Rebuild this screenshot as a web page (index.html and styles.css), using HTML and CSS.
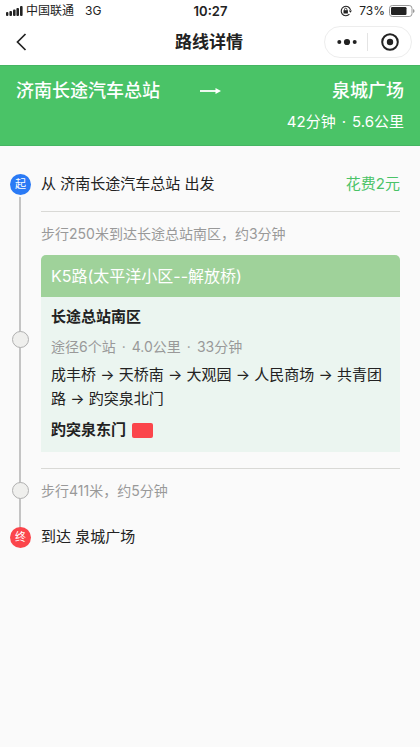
FILE: index.html
```html
<!DOCTYPE html>
<html lang="zh-CN">
<head>
<meta charset="utf-8">
<meta name="viewport" content="width=device-width, initial-scale=1">
<title>路线详情</title>
<link rel="stylesheet" href="styles.css">
</head>
<body>
<div class="status">
  <div class="status-left">
    <svg class="signal" width="17" height="10" viewBox="0 0 17 10" aria-hidden="true">
      <rect x="0" y="6" width="2.4" height="4" rx="1"/><rect x="3.4" y="5" width="2.6" height="5" rx="1"/><rect x="7" y="3.5" width="2.6" height="6.5" rx="1"/><rect x="10.4" y="2" width="2.6" height="8" rx="1"/><rect x="14" y="0" width="2.6" height="10" rx="1"/>
    </svg>
    <span>中国联通</span>
    <span class="network">3G</span>
  </div>
  <span class="clock">10:27</span>
  <div class="status-right">
    <svg width="12" height="12" viewBox="0 0 12 12" fill="none" stroke="#222" aria-hidden="true">
      <path d="M9.4 9.2A4.7 4.7 0 1 1 10.5 5" stroke-width="1.1"/><path d="M8.8 5.4H12L10.4 7.8Z" fill="#222" stroke="none"/><rect x="3.5" y="5.2" width="4.4" height="3.3" fill="#222" stroke="none"/><path d="M4.5 5.4V4.4a1.2 1.2 0 0 1 2.4 0v1" stroke-width=".9"/>
    </svg>
    <span class="charge">73%</span>
    <svg width="26" height="12" viewBox="0 0 26 12" aria-hidden="true">
      <rect x=".5" y=".5" width="22.5" height="11" rx="2.8" fill="none" stroke="#999"/><rect x="2" y="2" width="15.5" height="8" rx="1.2" fill="#222"/><path d="M24 4q1.6.4 1.6 2T24 8Z" fill="#999"/>
    </svg>
  </div>
</div>
<header class="nav">
  <button class="back" type="button" aria-label="返回">
    <svg width="11" height="18" viewBox="0 0 11 18" fill="none" stroke="#222" stroke-width="1.7"><path d="M9.5 1L1.5 9l8 8"/></svg>
  </button>
  <h1>路线详情</h1>
  <div class="capsule">
    <button type="button" aria-label="更多">
      <svg width="20" height="8" viewBox="0 0 20 8" fill="#222"><circle cx="2.3" cy="4" r="2"/><circle cx="10" cy="4" r="3.1"/><circle cx="17.7" cy="4" r="2"/></svg>
    </button>
    <button type="button" aria-label="关闭">
      <svg width="18" height="18" viewBox="0 0 18 18"><circle cx="9" cy="9" r="7.8" fill="none" stroke="#222" stroke-width="2"/><circle cx="9" cy="9" r="3.2" fill="#222"/></svg>
    </button>
  </div>
</header>
<section class="banner">
  <div class="ends">
    <span>济南长途汽车总站</span>
    <svg width="21" height="8" viewBox="0 0 21 8" aria-hidden="true"><path d="M0 4H18" stroke="#fff" stroke-width="1.8"/><path d="M15.5 1L21 4l-5.5 3Z" fill="#fff"/></svg>
    <span class="dest">泉城广场</span>
  </div>
  <p class="facts total"><span>42分钟</span><span>·</span><span>5.6公里</span></p>
</section>
<main>
  <ol class="route">
    <li class="step start">
      <span class="mark from">起</span>
      <div class="body"><span>从 济南长途汽车总站 出发</span><span class="fare">花费2元</span></div>
    </li>
    <li class="step">
      <span class="mark dot"></span>
      <div class="body leg">
        <p class="walk">步行250米到达长途总站南区，约3分钟</p>
        <article class="card">
          <h2>K5路(太平洋小区--解放桥)</h2>
          <div class="detail">
            <p class="stop">长途总站南区</p>
            <p class="facts info"><span>途径6个站</span><span>·</span><span>4.0公里</span><span>·</span><span>33分钟</span></p>
            <p class="via">成丰桥 → 天桥南 → 大观园 → 人民商场 → 共青团路 → 趵突泉北门</p>
            <p class="stop">趵突泉东门<span class="flag"></span></p>
          </div>
        </article>
      </div>
    </li>
    <li class="step">
      <span class="mark dot"></span>
      <div class="body leg"><p class="walk">步行411米，约5分钟</p></div>
    </li>
    <li class="step finish">
      <span class="mark to">终</span>
      <div class="body">到达 泉城广场</div>
    </li>
  </ol>
</main>
</body>
</html>
```
FILE: styles.css
```css
* { box-sizing: border-box; }
body {
  margin: 0;
  min-height: 100vh;
  background: #fafafa;
  color: #222;
  font: 15px/24px Inter, "Noto Sans CJK SC", sans-serif;
}
h1, h2, p, ol { margin: 0; padding: 0; }
button { border: 0; padding: 0; background: none; display: flex; align-items: center; justify-content: center; }
svg { display: block; flex: none; }

.status {
  display: grid;
  grid-template-columns: 1fr auto 1fr;
  align-items: center;
  height: 22px;
  padding: 0 5px 0 6px;
  background: #fff;
  font-size: 12px;
  line-height: 22px;
}
.status-left, .status-right { display: flex; align-items: center; }
.status-left { gap: 3px; }
.status-right { justify-content: flex-end; }
.signal { fill: #222; }
.network { margin-left: 8px; }
.clock { font-size: 13px; font-weight: 600; }
.charge { margin: 0 4px 0 7px; }

.nav {
  display: grid;
  grid-template-columns: 1fr auto 1fr;
  align-items: center;
  height: 43px;
  padding: 0 8px 4px 6px;
  background: #fff;
}
.back { width: 30px; height: 36px; }
.nav h1 { font-size: 17px; font-weight: 600; }
.capsule {
  justify-self: end;
  display: flex;
  width: 88px;
  height: 32px;
  border: 1px solid #ededed;
  border-radius: 16px;
}
.capsule button { flex: 1; }
.capsule button:first-child { background: linear-gradient(#e4e4e4, #e4e4e4) right center / 1px 18px no-repeat; }

.banner {
  padding: 13px 16px 11px;
  background: #4ac367;
  border-top: 1px solid #45b562;
  border-bottom: 1px solid #45b562;
  color: #fff;
}
.ends {
  display: grid;
  grid-template-columns: 1fr auto 1fr;
  align-items: center;
  font-size: 18px;
  font-weight: 500;
}
.dest { text-align: right; }
.facts { display: flex; gap: 6px; }
.total { justify-content: flex-end; margin-top: 7px; }

.route { position: relative; list-style: none; padding: 11px 20px 0 10px; }
.route::before {
  content: "";
  position: absolute;
  top: 38px;
  bottom: 25px;
  left: 19px;
  width: 2px;
  background: #c4c4c4;
}
.step { position: relative; display: grid; grid-template-columns: 21px 1fr; column-gap: 10px; align-items: center; }
.mark { justify-self: center; border-radius: 50%; }
.from, .to {
  width: 21px;
  height: 21px;
  color: #fff;
  font-size: 11px;
  line-height: 21px;
  text-align: center;
}
.from { background: #2a7af5; box-shadow: 0 0 0 2px #fafafa; }
.to { background: #fb454b; }
.dot { width: 17px; height: 17px; background: #efefed; border: 1px solid #b0b0b0; }
.start .body { display: flex; justify-content: space-between; line-height: 54px; }
.finish .body { line-height: 50px; }
.fare { color: #4ac367; }
.leg { border-top: 1px solid #d9d9d6; }
.walk { color: #999; font-size: 14px; line-height: 43px; }
.card { margin-bottom: 16px; border-radius: 5px 5px 0 0; overflow: hidden; background: #ebf5f0; }
.card h2 {
  padding: 0 10px;
  background: #9fd29a;
  color: #fff;
  font-size: 16px;
  font-weight: 400;
  line-height: 42px;
}
.detail { padding: 8px 10px 10px; }
.stop { display: flex; align-items: center; gap: 6px; font-weight: 600; }
.info { margin: 6px 0 4px; color: #999; font-size: 14px; }
.via { margin-bottom: 7px; }
.flag { width: 21px; height: 15px; border-radius: 2px; background: #fb454b; }
```
